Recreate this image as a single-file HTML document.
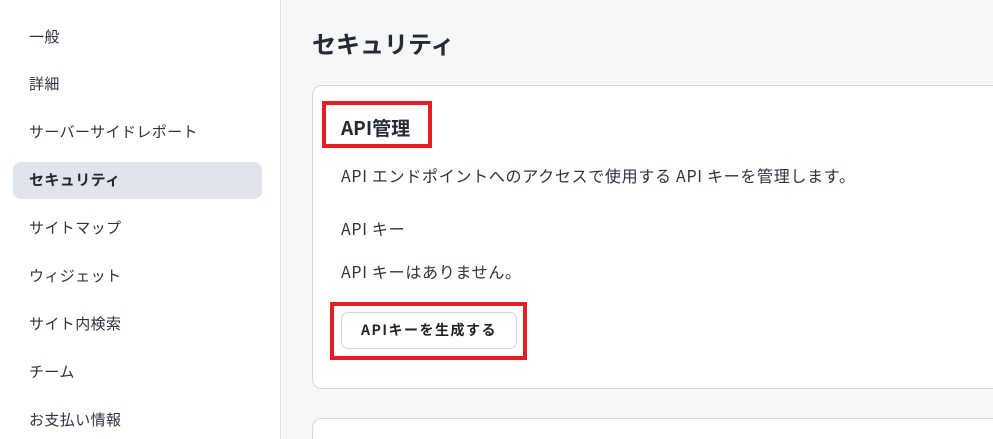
<!DOCTYPE html>
<html style="overflow:hidden;width:993px;height:439px"><head><meta charset="utf-8"><style>
*{margin:0;padding:0;box-sizing:border-box}
body{width:993px;height:439px;overflow:hidden;background:#fff;font-family:"Noto Sans CJK JP","Liberation Sans",sans-serif;color:#1f2937;position:relative}
.side{position:absolute;left:0;top:0;width:281px;height:439px;background:#fff;border-right:1px solid #d9dee6}
.it{position:absolute;left:29px;font-size:15px;line-height:20px;color:#2b3340;letter-spacing:0.4px}
.act{position:absolute;left:13px;top:162px;width:249px;height:37px;background:#e0e5ec;border-radius:8px}
.main{position:absolute;left:282px;top:0;width:711px;height:439px;background:#f6f7f9;overflow:hidden}
.card{position:absolute;left:30px;background:#fff;border:1px solid #d1d8e2;border-radius:10px;width:700px}
.t{position:absolute;font-size:16px;line-height:20px;color:#2b3340;white-space:nowrap;letter-spacing:0.7px}
.red{position:absolute;border:4px solid #e51d25}
.btn{position:absolute;left:341px;top:312px;width:176px;height:37px;border:1px solid #cdd5df;border-radius:7px;background:#fff;font-size:14px;font-weight:bold;text-align:center;line-height:35px;color:#222;letter-spacing:1.5px}
</style></head><body>
<div class="side">
<div class="act"></div>
<div class="it" style="top:27px">一般</div>
<div class="it" style="top:74px">詳細</div>
<div class="it" style="top:122px">サーバーサイドレポート</div>
<div class="it" style="top:170px;font-weight:bold;color:#1f2630">セキュリティ</div>
<div class="it" style="top:218px">サイトマップ</div>
<div class="it" style="top:266px">ウィジェット</div>
<div class="it" style="top:314px">サイト内検索</div>
<div class="it" style="top:362px">チーム</div>
<div class="it" style="top:410px">お支払い情報</div>
</div>
<div class="main">
<div class="card" style="top:85px;height:304px"></div>
<div class="card" style="top:418px;height:60px"></div>
</div>
<div style="position:absolute;left:312px;top:28px;font-size:24px;font-weight:bold;line-height:30px;color:#222a35">セキュリティ</div>
<div class="t" style="left:341px;top:116px;font-size:19px;font-weight:bold;line-height:24px;color:#222a35;letter-spacing:0">API管理</div>
<div class="red" style="left:322px;top:101px;width:110px;height:47px"></div>
<div class="t" style="left:341px;top:165px">API エンドポイントへのアクセスで使用する API キーを管理します。</div>
<div class="t" style="left:341px;top:218px">API キー</div>
<div class="t" style="left:341px;top:261px">API キーはありません。</div>
<div class="btn">APIキーを生成する</div>
<div class="red" style="left:330px;top:302px;width:197px;height:58px"></div>
</body></html>
